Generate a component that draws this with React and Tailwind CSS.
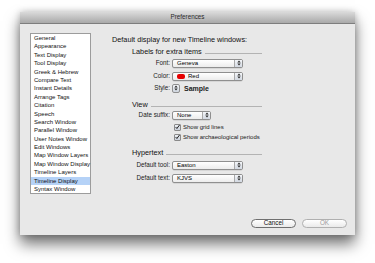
import React from 'react';

const panes = [
  'General',
  'Appearance',
  'Text Display',
  'Tool Display',
  'Greek & Hebrew',
  'Compare Text',
  'Instant Details',
  'Arrange Tags',
  'Citation',
  'Speech',
  'Search Window',
  'Parallel Window',
  'User Notes Window',
  'Edit Windows',
  'Map Window Layers',
  'Map Window Display',
  'Timeline Layers',
  'Timeline Display',
  'Syntax Window',
];

const Arrows = () => (
  <svg width="4" height="6" viewBox="0 0 4 6">
    <path d="M0.3 2.4 L2 0.4 L3.7 2.4 Z" fill="#2d2d2d" />
    <path d="M0.3 3.6 L2 5.6 L3.7 3.6 Z" fill="#2d2d2d" />
  </svg>
);

const Popup = ({ width, children }) => (
  <div
    className="h-[9px] flex items-stretch rounded-[2px] border border-[#8f8f8f] bg-gradient-to-b from-white to-[#ececec] shadow-[0_0.5px_0.5px_rgba(0,0,0,0.15)]"
    style={{ width }}
  >
    <div className="flex-1 flex items-center pl-[4px] gap-[3px] text-[6px] leading-none">{children}</div>
    <div className="w-[8px] border-l border-[#a9a9a9] flex items-center justify-center bg-gradient-to-b from-[#f4f6f9] to-[#d3d9e2]">
      <Arrows />
    </div>
  </div>
);

const Row = ({ label, children, className = '' }) => (
  <div className={`flex items-center h-[10px] ${className}`}>
    <div className="w-[58px] text-right text-[6.3px] leading-none text-[#1a1a1a]">{label}</div>
    <div className="ml-[2px] flex items-center">{children}</div>
  </div>
);

const Section = ({ title, className = '' }) => (
  <div className={`flex items-center h-[10px] pl-[20px] ${className}`}>
    <span className="text-[7.3px] leading-none text-[#111]">{title}</span>
    <div className="flex-1 h-px bg-[#b3b3b3] ml-[3px] mt-[3px]" />
  </div>
);

const Check = ({ label, className = '' }) => (
  <div className={`flex items-center h-[10px] pl-[62px] ${className}`}>
    <div className="w-[7px] h-[7px] rounded-[1px] border border-[#8a8a8a] bg-gradient-to-b from-[#eef1f5] to-[#c9d0da] flex items-center justify-center">
      <svg width="6" height="6" viewBox="0 0 6 6">
        <path d="M0.8 3.1 L2.3 4.8 L5.4 0.6" stroke="#1b1b1b" strokeWidth="1.2" fill="none" />
      </svg>
    </div>
    <span className="ml-[2px] text-[6px] leading-none text-[#1a1a1a]">{label}</span>
  </div>
);

const Button = ({ children, disabled }) => (
  <div
    className={`w-[45px] h-[9px] rounded-full border flex items-center justify-center text-[6.3px] leading-none bg-gradient-to-b from-white to-[#eaeaea] ${
      disabled ? 'border-[#b0b0b0] text-[#9a9a9a]' : 'border-[#6f6f6f] text-[#111]'
    }`}
  >
    {children}
  </div>
);

export default function App() {
  return (
    <div className="w-[375px] h-[263px] bg-white pt-[12px] pl-[20px] font-['Liberation_Sans',Arial,sans-serif] text-black overflow-hidden">
      <div className="w-[335px] h-[223px] bg-[#e8e8e8] flex flex-col shadow-[0_9px_14px_rgba(0,0,0,0.55),0_0_7px_rgba(0,0,0,0.22)]">
        <div className="h-[12px] shrink-0 bg-gradient-to-b from-[#dadada] to-[#a9a9a9] border-b border-[#7e7e7e] flex items-center justify-center text-[6.3px] leading-none text-[#2a2a2a]">
          Preferences
        </div>
        <div className="flex flex-1 items-start">
          <div className="ml-[10px] mt-[9px] w-[61px] bg-white border border-[#9c9c9c]">
            {panes.map((p) => (
              <div
                key={p}
                className={`h-[8.4px] leading-[8.4px] text-[6px] pl-[3px] whitespace-nowrap text-[#111] ${
                  p === 'Timeline Display' ? 'bg-[#b5d2f7]' : ''
                }`}
              >
                {p}
              </div>
            ))}
          </div>
          <div className="ml-[21px] mt-[11px] w-[150px] flex flex-col">
            <div className="h-[10px] flex items-center text-[7.3px] leading-none text-[#111] whitespace-nowrap">
              Default display for new Timeline windows:
            </div>
            <Section title="Labels for extra items" className="mt-[2px]" />
            <Row label="Font:" className="mt-[1px]">
              <Popup width={71}>Geneva</Popup>
            </Row>
            <Row label="Color:" className="mt-[3px]">
              <Popup width={71}>
                <span className="w-[8px] h-[5px] rounded-[2px] bg-[#e60000] inline-block" />
                Red
              </Popup>
            </Row>
            <Row label="Style:" className="mt-[2px]">
              <div className="w-[8px] h-[9px] rounded-[2px] border border-[#8f8f8f] bg-gradient-to-b from-[#f4f6f9] to-[#cfd6df] flex items-center justify-center">
                <Arrows />
              </div>
              <span className="ml-[4px] text-[7px] leading-none font-bold text-[#222]">Sample</span>
            </Row>
            <Section title="View" className="mt-[7px]" />
            <Row label="Date suffix:">
              <Popup width={39}>None</Popup>
            </Row>
            <Check label="Show grid lines" className="mt-[2px]" />
            <Check label="Show archaeological periods" />
            <Section title="Hypertext" className="mt-[6px]" />
            <Row label="Default tool:" className="mt-[2px]">
              <Popup width={71}>Easton</Popup>
            </Row>
            <Row label="Default text:" className="mt-[3px]">
              <Popup width={71}>KJVS</Popup>
            </Row>
          </div>
        </div>
        <div className="flex justify-end gap-[6px] pr-[8px] pb-[7px]">
          <Button>Cancel</Button>
          <Button disabled>OK</Button>
        </div>
      </div>
    </div>
  );
}
